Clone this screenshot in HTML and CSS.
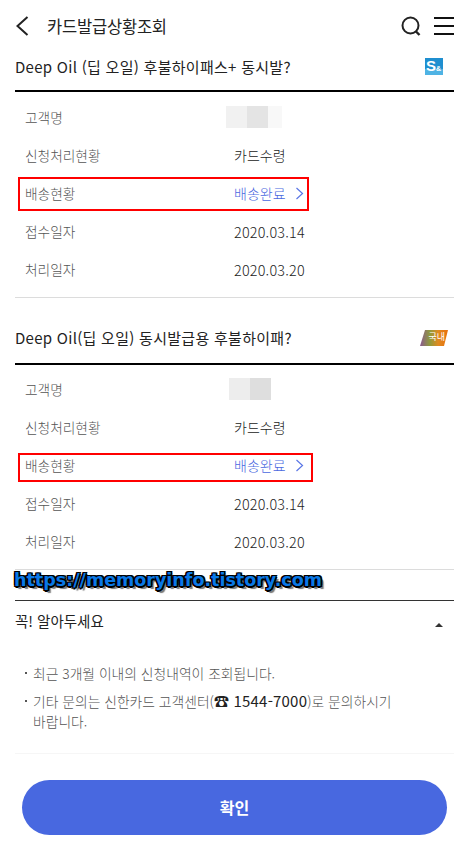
FILE: index.html
```html
<!DOCTYPE html>
<html lang="ko">
<head>
    <meta charset="utf-8">
    <title>카드발급상황조회</title>
    <link rel="stylesheet" href="styles.css">
</head>
<body>
    <header class="top-bar">
        <svg class="back-icon" width="14" height="22" viewBox="0 0 14 22"><path d="M12.5 2 L2.5 11 L12.5 20" fill="none" stroke="#222" stroke-width="2"/></svg>
        <h1 class="page-title">카드발급상황조회</h1>
        <svg class="search-icon" width="20" height="20" viewBox="0 0 20 20"><circle cx="9.5" cy="9.5" r="8" fill="none" stroke="#222" stroke-width="2"/><path d="M14.5 15 L18.5 19" stroke="#222" stroke-width="2.4"/></svg>
        <div class="menu-icon"><span></span><span></span><span></span></div>
    </header>

    <section class="card-block">
        <div class="card-head">
            <h2 class="card-name">Deep Oil (딥 오일) 후불하이패스+ 동시발?</h2>
            <svg class="badge-sm" width="18" height="17" viewBox="0 0 18 17"><rect width="18" height="17" fill="#1f8fd0"/><rect y="11" width="18" height="6" fill="#4fb3e4"/></svg>
            <span class="badge-sm-text">S<small>&amp;</small></span>
        </div>
        <dl class="info-list">
            <div class="info-row"><dt>고객명</dt><dd class="blur-cell first"><i class="blur-a"></i><i class="blur-b"></i><i class="blur-c"></i></dd></div>
            <div class="info-row"><dt>신청처리현황</dt><dd>카드수령</dd></div>
            <div class="info-row marked">
                <dt>배송현황</dt>
                <dd class="link-cell">배송완료<svg width="9" height="13" viewBox="0 0 9 13"><path d="M1.5 1 L7.5 6.5 L1.5 12" fill="none" stroke="#5a76e6" stroke-width="1.2"/></svg></dd>
                <div class="red-box"></div>
            </div>
            <div class="info-row"><dt>접수일자</dt><dd class="date">2020.03.14</dd></div>
            <div class="info-row"><dt>처리일자</dt><dd class="date">2020.03.20</dd></div>
        </dl>
    </section>

    <section class="card-block second">
        <div class="card-head">
            <h2 class="card-name">Deep Oil(딥 오일) 동시발급용 후불하이패?</h2>
            <svg class="badge-kr" width="28" height="18" viewBox="0 0 28 18"><defs><linearGradient id="krFill" x1="0" x2="1" y1="0" y2="0"><stop offset="0" stop-color="#8a5a90"/><stop offset="0.35" stop-color="#8f9a3c"/><stop offset="0.65" stop-color="#e08a20"/><stop offset="1" stop-color="#e8700c"/></linearGradient></defs><path d="M5 1 H28 L24 17 H0 Z" fill="url(#krFill)"/></svg>
            <span class="badge-kr-text">국내</span>
        </div>
        <dl class="info-list">
            <div class="info-row"><dt>고객명</dt><dd class="blur-cell shifted"><i class="blur-d"></i><i class="blur-e"></i></dd></div>
            <div class="info-row"><dt>신청처리현황</dt><dd>카드수령</dd></div>
            <div class="info-row marked">
                <dt>배송현황</dt>
                <dd class="link-cell">배송완료<svg width="9" height="13" viewBox="0 0 9 13"><path d="M1.5 1 L7.5 6.5 L1.5 12" fill="none" stroke="#5a76e6" stroke-width="1.2"/></svg></dd>
                <div class="red-box"></div>
            </div>
            <div class="info-row"><dt>접수일자</dt><dd class="date">2020.03.14</dd></div>
            <div class="info-row"><dt>처리일자</dt><dd class="date">2020.03.20</dd></div>
        </dl>
    </section>

    <div class="watermark">https://memoryinfo.tistory.com</div>

    <section class="notice">
        <div class="notice-head">
            <h3 class="notice-title">꼭! 알아두세요</h3>
            <span class="caret"></span>
        </div>
        <ul class="notice-list">
            <li>최근 3개월 이내의 신청내역이 조회됩니다.</li>
            <li>기타 문의는 신한카드 고객센터(<b>☎ 1544-7000</b>)로 문의하시기 바랍니다.</li>
        </ul>
    </section>

    <div class="btn-wrap">
        <button type="button" class="confirm-btn">확인</button>
    </div>
</body>
</html>
```

FILE: styles.css
```css
* {
    box-sizing: border-box;
}
body {
    margin: 0;
    height: 847px;
    overflow: hidden;
    position: relative;
    background-color: #ffffff;
    font-family: "Noto Sans CJK KR", "Noto Sans", sans-serif;
    font-weight: 300;
    color: #222;
}
.top-bar {
    display: flex;
    align-items: center;
    height: 52px;
    padding: 0 14px 0 15px;
}
.back-icon {
    margin-right: 18px;
}
.page-title {
    flex: 1;
    margin: 0;
    font-size: 16.5px;
    font-weight: 400;
    letter-spacing: -0.2px;
}
.search-icon {
    margin-right: 13px;
}
.menu-icon {
    display: flex;
    flex-direction: column;
    justify-content: space-between;
    width: 20px;
    height: 18px;
}
.menu-icon span {
    display: block;
    height: 2px;
    background-color: #111;
}
.card-block {
    margin: 0 14px 0 15px;
    height: 246px;
    border-bottom: 1px solid #dcdcdc;
}
.card-block.second {
    height: 272px;
    padding-top: 26px;
}
.card-head {
    position: relative;
    display: flex;
    align-items: center;
    height: 40px;
    padding-bottom: 10px;
    border-bottom: 2px solid #000;
}
.second .card-head {
    height: 41px;
    padding-bottom: 12px;
}
.card-name {
    flex: 1;
    margin: 0;
    font-size: 15px;
    font-weight: 400;
    letter-spacing: 0.28px;
}
.badge-sm {
    margin-right: 11px;
}
.badge-sm-text {
    position: absolute;
    right: 11px;
    top: 5px;
    width: 17px;
    font-size: 15px;
    line-height: 17px;
    font-weight: 700;
    color: #fff;
    font-family: "Liberation Sans", sans-serif;
}
.badge-sm-text small {
    font-size: 7px;
}
.badge-kr {
    margin-right: 6px;
}
.badge-kr-text {
    position: absolute;
    right: 9px;
    top: 6px;
    font-size: 9px;
    line-height: 14px;
    font-weight: 400;
    color: #fff;
}
.info-list {
    margin: 6px 0 0;
}
.second .info-list {
    margin-top: 5px;
}
.info-row {
    position: relative;
    display: flex;
    align-items: center;
    height: 38px;
    padding-left: 10px;
    font-size: 13.7px;
    color: #555;
}
.info-row dt {
    width: 209px;
}
.info-row dd {
    margin: 0;
    font-size: 14px;
    color: #222;
}
.info-row .date {
    font-size: 14.4px;
    letter-spacing: 0.2px;
}
.blur-cell {
    display: flex;
    height: 22px;
}
.blur-cell.first {
    margin-left: -8px !important;
}
.blur-cell.shifted {
    margin-left: -5px !important;
}
.blur-cell i {
    display: block;
}
.blur-a {
    width: 21px;
    background-color: #f1f1f1;
}
.blur-b {
    width: 21px;
    background-color: #e4e4e4;
}
.blur-c {
    width: 14px;
    background-color: #f8f8f8;
}
.blur-d {
    width: 21px;
    background-color: #ededed;
}
.blur-e {
    width: 21px;
    background-color: #dedede;
}
.link-cell {
    display: flex;
    align-items: center;
    gap: 9px;
    color: #4a68e0 !important;
}
.red-box {
    position: absolute;
    left: 3px;
    top: 3px;
    width: 291px;
    height: 34px;
    border: 2px solid #ff0000;
}
.second .red-box {
    width: 295px;
    top: 7px;
    height: 29px;
}
.watermark {
    position: absolute;
    left: 14px;
    top: 568px;
    font-family: "DejaVu Sans", sans-serif;
    font-size: 17.5px;
    line-height: 24px;
    font-weight: 700;
    color: #0a78e6;
    text-shadow: -1.5px -1px 0 #000, 1.5px -1px 0 #000, -1.5px 1px 0 #000, 1.5px 1px 0 #000, 0 -1.5px 0 #000, 0 1.5px 0 #000, 3px 3px 1px #777;
}
.notice {
    margin: 30px 14px 0 15px;
    border-top: 1px solid #333;
    height: 154px;
    border-bottom: 1px solid #f6f6f6;
}
.notice-head {
    display: flex;
    align-items: center;
    justify-content: space-between;
    height: 39px;
}
.notice-title {
    margin: 0;
    font-size: 14.5px;
    font-weight: 400;
}
.caret {
    width: 0;
    height: 0;
    margin-right: 11px;
    margin-top: 8px;
    border-left: 4px solid transparent;
    border-right: 4px solid transparent;
    border-bottom: 4px solid #333;
}
.notice-list {
    margin: 23px 0 0;
    padding: 0 55px 0 18px;
    list-style: none;
    font-size: 13.8px;
    line-height: 20px;
    color: #555;
}
.notice-list li {
    position: relative;
    margin-bottom: 8px;
}
.notice-list li::before {
    content: "";
    position: absolute;
    left: -8px;
    top: 9px;
    width: 2px;
    height: 2px;
    background-color: #555;
}
.notice-list b {
    font-weight: 400;
    font-size: 15px;
    line-height: 18px;
    letter-spacing: 0.2px;
    color: #222;
}
.btn-wrap {
    padding: 26px 21px 0 22px;
}
.confirm-btn {
    display: block;
    width: 100%;
    height: 55px;
    padding-bottom: 3px;
    border: none;
    border-radius: 28px;
    background-color: #4868e0;
    color: #fff;
    font-family: inherit;
    font-size: 16px;
    font-weight: 700;
}
```
